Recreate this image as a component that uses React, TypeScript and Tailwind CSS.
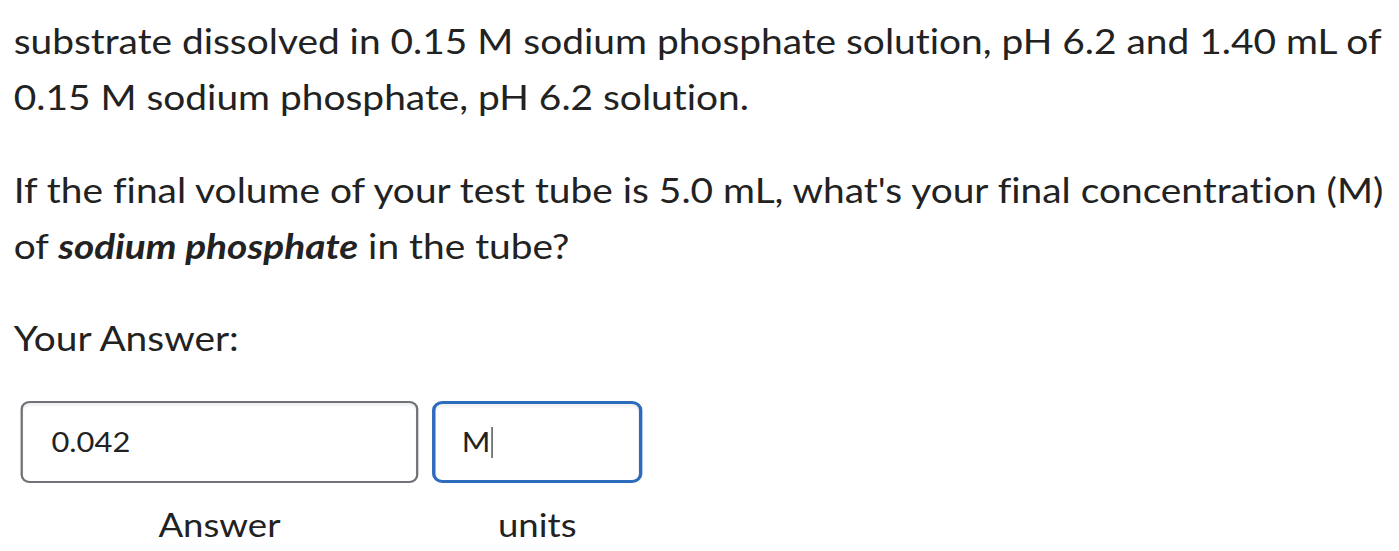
export default function App() {
  return (
    <div className="w-[1399px] h-[551px] overflow-hidden bg-white">
      <div
        className="w-[1224px] origin-top-left scale-x-[1.143] text-[#222222] pl-[12px] pt-[13px] [font-variant-ligatures:none]"
        style={{ fontFamily: "Lato, 'Noto Sans', sans-serif" }}
      >
        <p className="text-[34px] leading-[56px] whitespace-nowrap">
          substrate dissolved in 0.15 M sodium phosphate solution, pH 6.2 and 1.40 mL of
          <br />
          0.15 M sodium phosphate, pH 6.2 solution.
        </p>
        <p className="text-[34px] leading-[56px] mt-[37px] whitespace-nowrap">
          If the final volume of your test tube is 5.0 mL, what's your final concentration (M)
          <br />
          of <em className="font-bold">sodium phosphate</em> in the tube?
        </p>
        <p className="text-[34px] leading-[56px] mt-[36px]">Your Answer:</p>
        <div className="flex gap-[12px] mt-[35px] ml-[6px]">
          <div className="flex flex-col items-center">
            <div className="w-[348px] h-[82px] rounded-[8px] border-2 border-[#6f7377] shadow-[inset_0_3px_2px_rgba(0,0,0,0.06)] flex items-center pl-[25px] text-[27px]">
              0.042
            </div>
            <div className="text-[32px] leading-[40px] mt-[22px]">Answer</div>
          </div>
          <div className="flex flex-col items-center">
            <div className="w-[184px] h-[82px] rounded-[9px] border-[3px] border-[#2d6bbd] shadow-[inset_0_3px_2px_rgba(0,0,0,0.06)] flex items-center pl-[23px] text-[27px]">
              M<span className="inline-block w-[1px] h-[31px] bg-[#222] ml-[1px]"></span>
            </div>
            <div className="text-[32px] leading-[40px] mt-[22px]">units</div>
          </div>
        </div>
      </div>
    </div>
  );
}
